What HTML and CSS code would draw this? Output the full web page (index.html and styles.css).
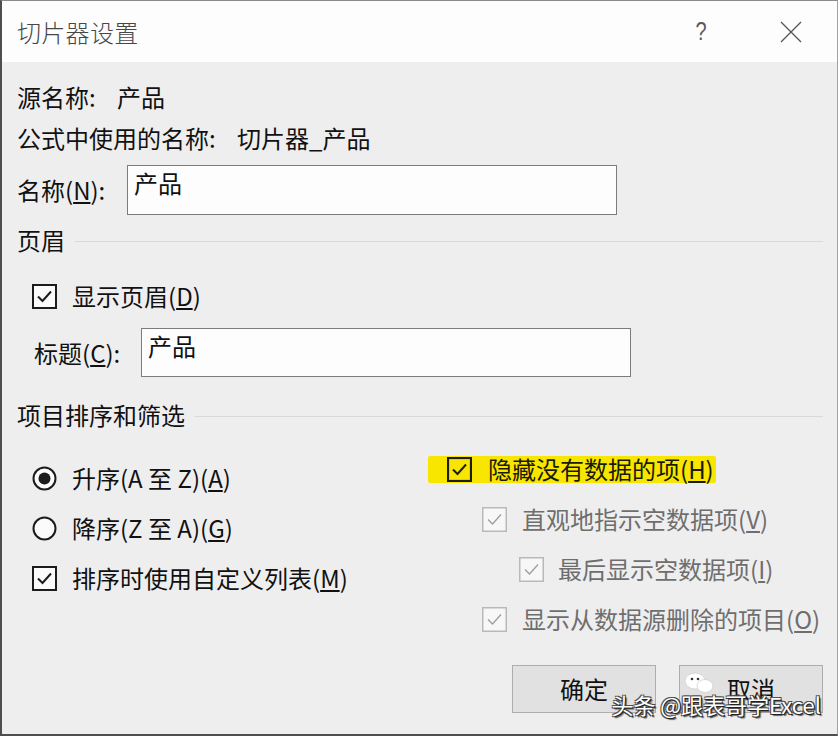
FILE: index.html
```html
<!DOCTYPE html>
<html lang="zh-CN">
<head>
<meta charset="utf-8">
<title>切片器设置</title>
<link rel="stylesheet" href="styles.css">
</head>
<body>
<div class="window">
  <div class="titlebar">
    <span class="title">切片器设置</span>
    <div class="title-btns">
      <span class="help">?</span>
      <svg class="close" width="22" height="22" viewBox="0 0 22 22"><path d="M1 1 L21 21 M21 1 L1 21" stroke="#555" stroke-width="1.3" fill="none"/></svg>
    </div>
  </div>
  <div class="content">
    <div class="row r-src"><span class="lbl-src">源名称:</span><span>产品</span></div>
    <div class="row r-formula"><span class="lbl-formula">公式中使用的名称:</span><span>切片器_产品</span></div>
    <div class="row r-name"><span class="lbl-name">名称(<u>N</u>):</span><div class="input name-input">产品</div></div>
    <div class="section sec-header"><span>页眉</span><div class="sep"></div></div>
    <div class="row check-row show-header">
      <svg class="cb" width="25" height="25" viewBox="0 0 25 25"><rect x="1" y="1" width="23" height="23" fill="#fbfbfb" stroke="#1c1c1c" stroke-width="2"/><path d="M6 12.5 L10.5 17 L19 7.5" stroke="#1c1c1c" stroke-width="2" fill="none"/></svg>
      <span class="cb-label">显示页眉(<u>D</u>)</span>
    </div>
    <div class="row r-caption"><span class="lbl-caption">标题(<u>C</u>):</span><div class="input caption-input">产品</div></div>
    <div class="section sec-sort"><span>项目排序和筛选</span><div class="sep"></div></div>
    <div class="cols">
      <div class="col-left">
        <div class="opt">
          <svg class="radio" width="25" height="25" viewBox="0 0 25 25"><circle cx="12.5" cy="12.5" r="11" fill="#fbfbfb" stroke="#1c1c1c" stroke-width="2"/><circle cx="12.5" cy="12.5" r="6" fill="#1c1c1c"/></svg>
          <span class="opt-label">升序(A 至 Z)(<u>A</u>)</span>
        </div>
        <div class="opt">
          <svg class="radio" width="25" height="25" viewBox="0 0 25 25"><circle cx="12.5" cy="12.5" r="11" fill="#fbfbfb" stroke="#1c1c1c" stroke-width="2"/></svg>
          <span class="opt-label">降序(Z 至 A)(<u>G</u>)</span>
        </div>
        <div class="opt">
          <svg class="cb" width="25" height="25" viewBox="0 0 25 25"><rect x="1" y="1" width="23" height="23" fill="#fbfbfb" stroke="#1c1c1c" stroke-width="2"/><path d="M6 12.5 L10.5 17 L19 7.5" stroke="#1c1c1c" stroke-width="2" fill="none"/></svg>
          <span class="opt-label">排序时使用自定义列表(<u>M</u>)</span>
        </div>
      </div>
      <div class="col-right">
        <div class="ropt r-hide">
          <div class="highlight">
            <svg class="cb" width="25" height="25" viewBox="0 0 25 25"><rect x="1" y="1" width="23" height="23" fill="none" stroke="#1c1c1c" stroke-width="2.2"/><path d="M6 12.5 L10.5 17 L19 7.5" stroke="#1c1c1c" stroke-width="2" fill="none"/></svg>
            <span class="hl-label">隐藏没有数据的项(<u>H</u>)</span>
          </div>
        </div>
        <div class="ropt sub">
          <svg class="cb" width="25" height="25" viewBox="0 0 25 25"><rect x="0.75" y="0.75" width="23.5" height="23.5" fill="#f7f7f7" stroke="#b9b9b9" stroke-width="1.5"/><path d="M6 12.5 L10.5 17 L19 7.5" stroke="#9d9d9d" stroke-width="1.3" fill="none"/></svg>
          <span class="dis-label">直观地指示空数据项(<u>V</u>)</span>
        </div>
        <div class="ropt subsub">
          <svg class="cb" width="25" height="25" viewBox="0 0 25 25"><rect x="0.75" y="0.75" width="23.5" height="23.5" fill="#f7f7f7" stroke="#b9b9b9" stroke-width="1.5"/><path d="M6 12.5 L10.5 17 L19 7.5" stroke="#9d9d9d" stroke-width="1.3" fill="none"/></svg>
          <span class="dis-label">最后显示空数据项(<u>I</u>)</span>
        </div>
        <div class="ropt sub">
          <svg class="cb" width="25" height="25" viewBox="0 0 25 25"><rect x="0.75" y="0.75" width="23.5" height="23.5" fill="#f7f7f7" stroke="#b9b9b9" stroke-width="1.5"/><path d="M6 12.5 L10.5 17 L19 7.5" stroke="#9d9d9d" stroke-width="1.3" fill="none"/></svg>
          <span class="dis-label">显示从数据源删除的项目(<u>O</u>)</span>
        </div>
      </div>
    </div>
    <div class="buttons">
      <div class="btn">确定</div>
      <div class="btn">取消</div>
    </div>
  </div>
  <div class="watermark">
    <svg class="wm-icon" width="32" height="24" viewBox="0 0 32 24"><ellipse cx="12" cy="10" rx="10" ry="8" fill="#fff" stroke="#cfcfcf" stroke-width="0.8"/><ellipse cx="22" cy="15" rx="8" ry="6.5" fill="#fff" stroke="#cfcfcf" stroke-width="0.8"/><circle cx="9" cy="8" r="1.3" fill="#333"/><circle cx="15" cy="8" r="1.3" fill="#333"/></svg>
    <span class="wm-text">头条 @跟表哥学Excel</span>
  </div>
</div>
</body>
</html>
```

FILE: styles.css
```css
html, body {
  margin: 0;
  padding: 0;
  background: #ffffff;
}

body {
  font-family: "Noto Sans CJK SC", "Noto Sans", sans-serif;
  color: #111111;
}

.window {
  position: relative;
  width: 838px;
  height: 736px;
  box-sizing: border-box;
  border-top: 1px solid #8a8a8a;
  border-left: 2px solid #4e4e4e;
  border-right: 1px solid #a2a2a2;
  border-bottom: 2px solid #4e4e4e;
  background: #efeeef;
  display: flex;
  flex-direction: column;
  overflow: hidden;
}

.titlebar {
  height: 61px;
  flex: none;
  background: #fdfdfe;
  display: flex;
  align-items: center;
  justify-content: space-between;
  padding: 0 35px 0 15px;
}

.title {
  font-size: 24px;
  font-weight: 300;
  color: #474747;
  line-height: 1;
  letter-spacing: 0.3px;
}

.title-btns {
  display: flex;
  align-items: center;
  gap: 72px;
}

.help {
  font-family: "Liberation Sans", sans-serif;
  font-size: 25px;
  font-weight: 400;
  color: #5a5a5a;
  line-height: 1;
  transform: scaleX(0.8);
}

.close {
  display: block;
}

.content {
  flex: 1;
  padding: 15px 14px 0 15px;
  display: flex;
  flex-direction: column;
  font-size: 24px;
  line-height: 1;
  white-space: nowrap;
}

.row {
  display: flex;
  align-items: center;
  flex: none;
}

.r-src {
  height: 40px;
}

.lbl-src {
  width: 100px;
}

.r-formula {
  height: 42px;
}

.lbl-formula {
  width: 220px;
}

.r-name {
  height: 50px;
  margin-top: 6px;
}

.lbl-name {
  width: 110px;
}

.input {
  box-sizing: border-box;
  height: 100%;
  background: #fdfdfd;
  border: 1.5px solid #7c7c7c;
  padding: 5px 0 0 6px;
  display: flex;
  align-items: flex-start;
}

.name-input {
  width: 490px;
}

.section {
  display: flex;
  align-items: center;
  height: 40px;
  flex: none;
}

.sep {
  flex: 1;
  height: 1px;
  background: #dad9da;
  margin-left: 10px;
  margin-top: 2px;
}

.sec-header {
  margin-top: 5px;
}

.show-header {
  height: 40px;
  margin-top: 16px;
  padding-left: 15px;
}

.cb, .radio {
  display: block;
  flex: none;
}

.cb-label {
  margin-left: 15px;
}

.r-caption {
  height: 49px;
  margin-top: 12px;
  padding-left: 17px;
}

.lbl-caption {
  width: 107px;
}

.caption-input {
  width: 490px;
}

.sec-sort {
  margin-top: 18px;
}

.cols {
  display: flex;
  flex: none;
}

.col-left {
  width: 411px;
  flex: none;
  padding-top: 18px;
  padding-left: 15px;
  box-sizing: border-box;
  display: flex;
  flex-direction: column;
}

.opt {
  height: 50px;
  display: flex;
  align-items: center;
}

.opt-label {
  margin-left: 15px;
}

.col-right {
  flex: 1;
  padding-top: 9px;
  display: flex;
  flex-direction: column;
}

.ropt {
  height: 50px;
  display: flex;
  align-items: center;
}

.highlight {
  height: 27px;
  box-sizing: border-box;
  background: #f8e600;
  padding: 0 2px 0 19px;
  display: flex;
  align-items: center;
  border-radius: 2px;
}

.hl-label {
  margin-left: 16px;
  color: #1a1a00;
}

.sub {
  padding-left: 54px;
}

.subsub {
  padding-left: 91px;
}

.dis-label {
  margin-left: 15px;
  color: #6e6e6e;
}

.subsub .dis-label {
  margin-left: 14px;
}

.buttons {
  margin-top: 21px;
  display: flex;
  justify-content: flex-end;
  gap: 23px;
  flex: none;
}

.btn {
  width: 144px;
  height: 48px;
  box-sizing: border-box;
  background: #e1e1e1;
  border: 1px solid #adadad;
  display: flex;
  align-items: center;
  justify-content: center;
  color: #111;
}

.watermark {
  position: absolute;
  right: 16px;
  bottom: 19px;
  display: flex;
  align-items: flex-end;
}

.wm-icon {
  position: absolute;
  left: 72px;
  bottom: 20px;
}

.wm-text {
  position: relative;
  font-size: 22px;
  line-height: 1;
  color: #ffffff;
  letter-spacing: 0;
  white-space: nowrap;
  text-shadow: 1px 1px 0 #222, -1px -1px 0 #555, 1px -1px 0 #444, -1px 1px 0 #444, 2px 2px 1px rgba(0,0,0,0.6);
}
```
